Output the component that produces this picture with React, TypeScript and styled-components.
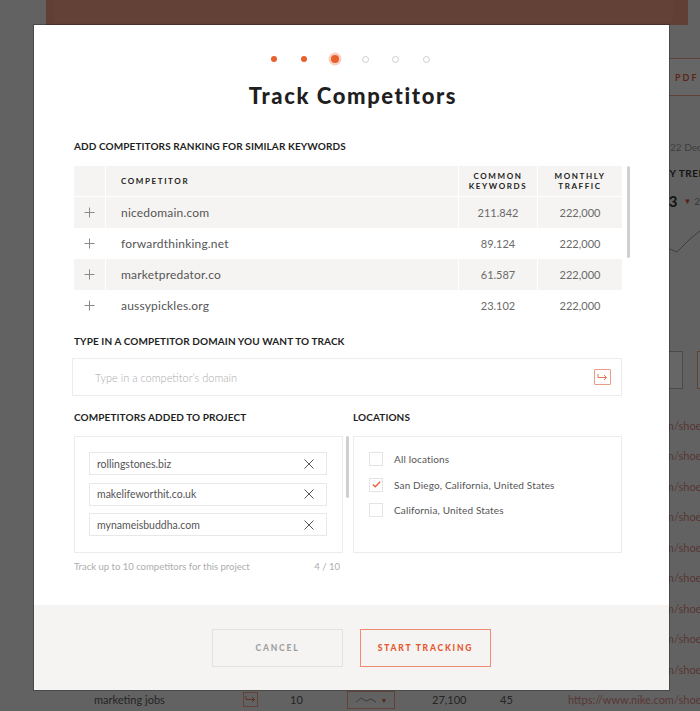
import React from "react";
import styled, { createGlobalStyle, css } from "styled-components";

const GlobalStyle = createGlobalStyle`
  html, body { margin: 0; padding: 0; }
  body {
    font-family: Lato, "Liberation Sans", sans-serif;
    background: #f6f6f6;
    overflow: hidden;
  }
  * { box-sizing: border-box; }
`;

/* ---------- background page (dimmed) ---------- */

const Page = styled.div`
  position: relative;
  width: 700px;
  height: 711px;
  overflow: hidden;
  background: #f6f6f6;
`;

const TopBar = styled.div`
  height: 25px;
  margin: 0 12px 0 46px;
  background: #f39e85;
  padding: 0 15px 3px 8px;
  display: flex;
`;

const TopBarInner = styled.div`
  flex: 1;
  background: #f7a28a;
`;

const Dashboard = styled.div`
  display: grid;
  grid-template-columns: 655px 1fr;
  height: 385px;
`;

const MainArea = styled.div``;

const Side = styled.div`
  display: flex;
  flex-direction: column;
  padding-top: 33px;
  white-space: nowrap;
`;

const PdfButton = styled.div`
  margin-left: 11px;
  height: 38px;
  border: 1px solid #f0a58f;
  background: #fff;
  display: flex;
  align-items: center;
  padding-left: 8px;
  color: #e8603c;
  font-size: 9px;
  font-weight: 700;
  letter-spacing: 2px;
`;

const DateText = styled.div`
  margin: 44px 0 0 15px;
  font-size: 10px;
  line-height: 14px;
  color: #9a9a9a;
`;

const TrendLabel = styled.div`
  margin: 12px 0 0 1px;
  font-size: 10px;
  line-height: 14px;
  font-weight: 700;
  letter-spacing: 0.5px;
  color: #333;
`;

const TrendValue = styled.div`
  margin: 12px 0 0 5px;
  display: flex;
  align-items: center;
  gap: 6px;
  font-size: 15px;
  font-weight: 700;
  color: #333;
`;

const TrendDelta = styled.span`
  font-size: 10px;
  font-weight: 400;
  color: #888;
  display: flex;
  align-items: center;
  gap: 3px;
`;

const DownTri = styled.span`
  color: #e04a4a;
  font-size: 8px;
`;

const ChartSvg = styled.svg`
  display: block;
  margin-top: 12px;
`;

const SideBoxes = styled.div`
  margin: 89px 0 0 -40px;
  display: flex;
  gap: 14px;
`;

const SideBox = styled.div<{ $accent?: boolean }>`
  width: 68px;
  height: 38px;
  background: #fff;
  border: 1px solid ${(p) => (p.$accent ? "#f0a58f" : "#bbb")};
`;

const BgTable = styled.div`
  display: flex;
  flex-direction: column;
`;

const BgRow = styled.div`
  display: grid;
  grid-template-columns: 149px 47px 57px 85px 68px 68px 1fr;
  padding-left: 94px;
  height: 30.5px;
  align-items: center;
  font-size: 11px;
  color: #5a5a5a;
  white-space: nowrap;
`;

const BgLink = styled.span`
  grid-column: 7;
  color: #d88a84;
`;

const BgIconBox = styled.span`
  width: 15px;
  height: 15px;
  border: 1px solid #f0a58f;
  display: flex;
  align-items: center;
  justify-content: center;
`;

const BgChartBox = styled.span`
  width: 48px;
  height: 18px;
  border: 1px solid #f0a58f;
  display: flex;
  align-items: center;
  justify-content: center;
  gap: 4px;
`;

const BgArrow = styled.span`
  color: #e8603c;
  font-size: 7px;
`;

const Overlay = styled.div`
  position: absolute;
  inset: 0;
  background: rgba(0, 0, 0, 0.6);
  padding: 25px 0 0 34px;
  display: flex;
  align-items: flex-start;
`;

/* ---------- modal ---------- */

const Modal = styled.div`
  width: 635px;
  height: 665px;
  background: #fff;
  display: flex;
  flex-direction: column;
  box-shadow: 0 0 0 1px rgba(0, 0, 0, 0.25);
`;

const Body = styled.div`
  flex: 1;
  padding: 0 47px 0 40px;
  display: flex;
  flex-direction: column;
`;

const Steps = styled.div`
  margin-top: 28px;
  height: 12px;
  display: flex;
  justify-content: center;
  padding-left: 4px;
`;

const StepSlot = styled.div`
  width: 30.5px;
  display: flex;
  align-items: center;
  justify-content: center;
`;

type DotState = "done" | "active" | "todo";

const Dot = styled.span<{ $state: DotState }>`
  display: block;
  border-radius: 50%;
  ${({ $state }) =>
    $state === "done"
      ? css`
          width: 6px;
          height: 6px;
          background: #e8602c;
        `
      : $state === "active"
      ? css`
          width: 8px;
          height: 8px;
          background: #e8602c;
          box-shadow: 0 0 0 2.5px rgba(238, 130, 90, 0.38);
        `
      : css`
          width: 7px;
          height: 7px;
          border: 1px solid #cdcdcd;
        `}
`;

const Title = styled.h1`
  margin: 18px 0 0;
  text-align: center;
  font-size: 22px;
  line-height: 26px;
  font-weight: 900;
  letter-spacing: 1.6px;
  color: #1f1f1f;
  padding-left: 10px;
`;

const SectionLabel = styled.div<{ $mt: number }>`
  margin-top: ${(p) => p.$mt}px;
  font-size: 10px;
  line-height: 14px;
  font-weight: 700;
  color: #1f1f1f;
  letter-spacing: 0.1px;
  white-space: nowrap;
`;

const TableWrap = styled.div`
  margin: 13px -8px 0 0;
  display: flex;
  align-items: flex-start;
`;

const Table = styled.div`
  flex: 1;
  display: flex;
  flex-direction: column;
`;

const ScrollThumb = styled.div<{ $h: number; $gap?: number }>`
  width: 3px;
  height: ${(p) => p.$h}px;
  margin-left: ${(p) => p.$gap ?? 5}px;
  border-radius: 2px;
  background: #cfcfcf;
  flex-shrink: 0;
`;

const TRow = styled.div<{ $shade: boolean; $head?: boolean }>`
  display: grid;
  grid-template-columns: 31px 353px 79px 1fr;
  height: 31px;
  background: ${(p) => (p.$shade ? "#f5f4f2" : "#fff")};
  ${(p) =>
    p.$head &&
    css`
      border-bottom: 1px solid #fff;
    `}
`;

const TCell = styled.div<{ $center?: boolean; $divider?: boolean }>`
  display: flex;
  align-items: center;
  justify-content: ${(p) => (p.$center ? "center" : "flex-start")};
  text-align: ${(p) => (p.$center ? "center" : "left")};
  padding-left: ${(p) => (p.$center ? 0 : 15)}px;
  border-left: ${(p) => (p.$divider ? "1px solid #fff" : "none")};
`;

const PlusCell = styled.div`
  display: flex;
  align-items: center;
  justify-content: center;
`;

const HeadText = styled.span`
  font-size: 8px;
  line-height: 10px;
  font-weight: 700;
  letter-spacing: 1.6px;
  color: #222;
`;

const DomainText = styled.span`
  font-size: 12px;
  color: #555;
  letter-spacing: 0.2px;
`;

const NumText = styled.span`
  font-size: 11px;
  color: #6a6a6a;
`;

const InputBox = styled.div`
  margin-top: 10px;
  height: 38px;
  border: 1px solid #ececec;
  display: flex;
  align-items: center;
  justify-content: space-between;
  padding: 0 10px 0 22px;
  margin-left: -2px;
`;

const Placeholder = styled.span`
  font-size: 11px;
  color: #ababab;
  font-weight: 300;
`;

const SubmitIcon = styled.span`
  width: 17px;
  height: 16px;
  border: 1px solid #ef9a86;
  border-radius: 1px;
  display: flex;
  align-items: center;
  justify-content: center;
`;

const TwoCol = styled.div`
  display: grid;
  grid-template-columns: 275px 269px;
  column-gap: 4px;
`;

const BoxRow = styled.div`
  margin-top: 12px;
  display: flex;
  align-items: flex-start;
  gap: 3px;
`;

const Box = styled.div`
  width: 269px;
  height: 117px;
  border: 1px solid #ececec;
  padding: 15px 15px 0 14px;
  display: flex;
  flex-direction: column;
  gap: 7.5px;
  flex-shrink: 0;
`;

const LocBox = styled(Box)`
  padding: 15px 15px 0 15px;
  gap: 11.5px;
`;

const Chip = styled.div`
  height: 23px;
  border: 1px solid #e8e8e8;
  display: flex;
  align-items: center;
  justify-content: space-between;
  padding: 0 12px 0 7px;
  font-size: 10.5px;
  color: #555;
`;

const LocItem = styled.label`
  display: flex;
  align-items: center;
  gap: 11px;
  height: 14px;
  font-size: 10px;
  color: #555;
  letter-spacing: 0.15px;
`;

const CheckBox = styled.span`
  width: 14px;
  height: 14px;
  border: 1px solid #e4e4e4;
  display: flex;
  align-items: center;
  justify-content: center;
  flex-shrink: 0;
`;

const Helper = styled.div`
  margin-top: 8px;
  height: 12px;
  display: flex;
  justify-content: space-between;
  padding-right: 9px;
  font-size: 9.5px;
  line-height: 12px;
  color: #adadad;
`;

const Footer = styled.div`
  height: 85px;
  background: #f5f4f2;
  display: flex;
  align-items: center;
  justify-content: center;
  gap: 17px;
`;

const Button = styled.button<{ $primary?: boolean }>`
  width: 131px;
  height: 38px;
  background: transparent;
  border: 1px solid ${(p) => (p.$primary ? "#ef8b73" : "#e1e1e1")};
  color: ${(p) => (p.$primary ? "#e5572f" : "#a0a0a0")};
  font-family: inherit;
  font-size: 8.5px;
  font-weight: 900;
  letter-spacing: 1.8px;
  padding: 0;
  cursor: pointer;
`;

/* ---------- icons ---------- */

const PlusIcon = () => (
  <svg width="11" height="11" viewBox="0 0 11 11">
    <path d="M5.5 0.5v10M0.5 5.5h10" stroke="#8a8a8a" strokeWidth="1" fill="none" />
  </svg>
);

const CloseIcon = () => (
  <svg width="10" height="10" viewBox="0 0 10 10">
    <path d="M0.5 0.5l9 9M9.5 0.5l-9 9" stroke="#555" strokeWidth="1" fill="none" />
  </svg>
);

const CheckIcon = () => (
  <svg width="9" height="7" viewBox="0 0 9 7">
    <path d="M0.8 3.4l2.5 2.4L8.2 0.8" stroke="#e8603c" strokeWidth="1.4" fill="none" />
  </svg>
);

const EnterIcon = ({ color = "#e8745a" }: { color?: string }) => (
  <svg width="11" height="9" viewBox="0 0 11 9">
    <path d="M1 1v3.5h8.5M7 2l2.5 2.5L7 7" stroke={color} strokeWidth="1" fill="none" />
  </svg>
);

/* ---------- data ---------- */

const suggestions = [
  { domain: "nicedomain.com", keywords: "211.842", traffic: "222,000" },
  { domain: "forwardthinking.net", keywords: "89.124", traffic: "222,000" },
  { domain: "marketpredator.co", keywords: "61.587", traffic: "222,000" },
  { domain: "aussypickles.org", keywords: "23.102", traffic: "222,000" },
];

const added = ["rollingstones.biz", "makelifeworthit.co.uk", "mynameisbuddha.com"];

const locations = [
  { name: "All locations", checked: false },
  { name: "San Diego, California, United States", checked: true },
  { name: "California, United States", checked: false },
];

const steps: DotState[] = ["done", "done", "active", "todo", "todo", "todo"];

const hiddenRows = 9;

export default function App() {
  return (
    <>
      <GlobalStyle />
      <Page>
        <TopBar>
          <TopBarInner />
        </TopBar>
        <Dashboard>
          <MainArea />
          <Side>
            <PdfButton>PDF REPORT</PdfButton>
            <DateText>22 Dec 2019 – 28 Dec 2019</DateText>
            <TrendLabel>KEY TRENDS</TrendLabel>
            <TrendValue>
              23
              <TrendDelta>
                <DownTri>▼</DownTri>2.1%
              </TrendDelta>
            </TrendValue>
            <ChartSvg width="60" height="40" viewBox="0 0 60 40">
              <path d="M0 24 L12 26 L22 30 L34 18 L46 8 L60 2" stroke="#999" strokeWidth="1" fill="none" />
            </ChartSvg>
            <SideBoxes>
              <SideBox />
              <SideBox $accent />
            </SideBoxes>
          </Side>
        </Dashboard>
        <BgTable>
          {Array.from({ length: hiddenRows }).map((_, i) => (
            <BgRow key={i}>
              <BgLink>https://www.nike.com/shoes</BgLink>
            </BgRow>
          ))}
          <BgRow>
            <span>marketing jobs</span>
            <BgIconBox>
              <EnterIcon />
            </BgIconBox>
            <span>10</span>
            <BgChartBox>
              <svg width="22" height="8" viewBox="0 0 22 8">
                <path d="M1 6 L6 2 L11 5 L16 3 L21 6" stroke="#999" strokeWidth="1" fill="none" />
              </svg>
              <BgArrow>▼</BgArrow>
            </BgChartBox>
            <span>27,100</span>
            <span>45</span>
            <BgLink>https://www.nike.com/shoes</BgLink>
          </BgRow>
        </BgTable>

        <Overlay>
          <Modal>
            <Body>
              <Steps>
                {steps.map((s, i) => (
                  <StepSlot key={i}>
                    <Dot $state={s} />
                  </StepSlot>
                ))}
              </Steps>
              <Title>Track Competitors</Title>

              <SectionLabel $mt={30}>ADD COMPETITORS RANKING FOR SIMILAR KEYWORDS</SectionLabel>
              <TableWrap>
                <Table>
                  <TRow $shade $head>
                    <PlusCell />
                    <TCell $divider>
                      <HeadText>COMPETITOR</HeadText>
                    </TCell>
                    <TCell $center $divider>
                      <HeadText>
                        COMMON
                        <br />
                        KEYWORDS
                      </HeadText>
                    </TCell>
                    <TCell $center $divider>
                      <HeadText>
                        MONTHLY
                        <br />
                        TRAFFIC
                      </HeadText>
                    </TCell>
                  </TRow>
                  {suggestions.map((r, i) => (
                    <TRow key={r.domain} $shade={i % 2 === 0}>
                      <PlusCell>
                        <PlusIcon />
                      </PlusCell>
                      <TCell $divider>
                        <DomainText>{r.domain}</DomainText>
                      </TCell>
                      <TCell $center $divider>
                        <NumText>{r.keywords}</NumText>
                      </TCell>
                      <TCell $center $divider>
                        <NumText>{r.traffic}</NumText>
                      </TCell>
                    </TRow>
                  ))}
                </Table>
                <ScrollThumb $h={92} />
              </TableWrap>

              <SectionLabel $mt={13}>TYPE IN A COMPETITOR DOMAIN YOU WANT TO TRACK</SectionLabel>
              <InputBox>
                <Placeholder>Type in a competitor’s domain</Placeholder>
                <SubmitIcon>
                  <EnterIcon />
                </SubmitIcon>
              </InputBox>

              <TwoCol>
                <div>
                  <SectionLabel $mt={14}>COMPETITORS ADDED TO PROJECT</SectionLabel>
                  <BoxRow>
                    <Box>
                      {added.map((d) => (
                        <Chip key={d}>
                          <span>{d}</span>
                          <CloseIcon />
                        </Chip>
                      ))}
                    </Box>
                    <ScrollThumb $h={62} $gap={0} />
                  </BoxRow>
                  <Helper>
                    <span>Track up to 10 competitors for this project</span>
                    <span>4 / 10</span>
                  </Helper>
                </div>
                <div>
                  <SectionLabel $mt={14}>LOCATIONS</SectionLabel>
                  <BoxRow>
                    <LocBox>
                      {locations.map((l) => (
                        <LocItem key={l.name}>
                          <CheckBox>{l.checked && <CheckIcon />}</CheckBox>
                          {l.name}
                        </LocItem>
                      ))}
                    </LocBox>
                  </BoxRow>
                </div>
              </TwoCol>
            </Body>
            <Footer>
              <Button>CANCEL</Button>
              <Button $primary>START TRACKING</Button>
            </Footer>
          </Modal>
        </Overlay>
      </Page>
    </>
  );
}
